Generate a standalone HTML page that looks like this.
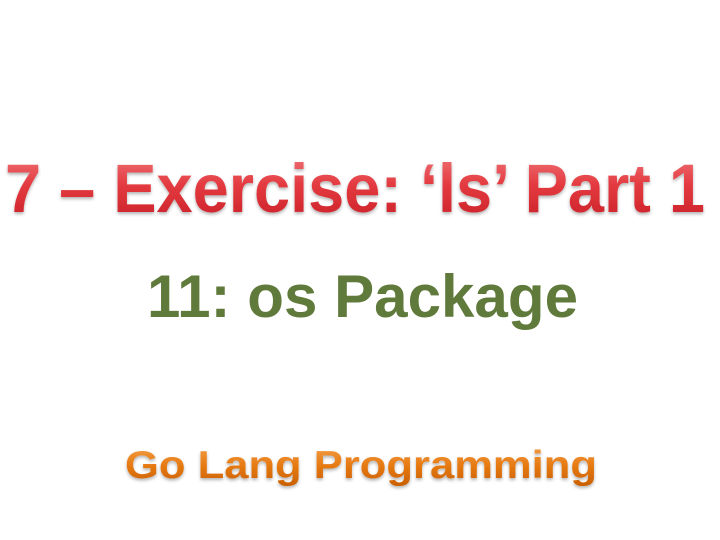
<!DOCTYPE html>
<html><head><style>html,body{margin:0;padding:0;background:#fff;}svg{display:block}</style></head>
<body>
<svg width="720" height="540" xmlns="http://www.w3.org/2000/svg">
<defs>
<linearGradient id="r" x1="0" y1="0" x2="0" y2="1"><stop offset="0" stop-color="#f07a7e"/><stop offset="0.45" stop-color="#e33a40"/><stop offset="1" stop-color="#c81e26"/></linearGradient>
<linearGradient id="o" x1="0" y1="0" x2="0" y2="1"><stop offset="0" stop-color="#f4a04a"/><stop offset="0.5" stop-color="#e67a12"/><stop offset="1" stop-color="#c85e00"/></linearGradient>
<filter id="s" x="-5%" y="-20%" width="110%" height="150%"><feDropShadow dx="0" dy="2" stdDeviation="1.5" flood-color="#000" flood-opacity="0.3"/></filter>
</defs>
<text x="5" y="212" font-family="Liberation Sans, sans-serif" font-weight="bold" font-size="69" fill="url(#r)" textLength="700" lengthAdjust="spacingAndGlyphs" filter="url(#s)">7 – Exercise: ‘ls’ Part 1</text>
<text x="147" y="317" font-family="Liberation Sans, sans-serif" font-weight="bold" font-size="60" fill="#607a3c" textLength="431" lengthAdjust="spacingAndGlyphs">11: os Package</text>
<text x="125" y="478" font-family="Liberation Sans, sans-serif" font-weight="bold" font-size="39" fill="url(#o)" textLength="472" lengthAdjust="spacingAndGlyphs" filter="url(#s)">Go Lang Programming</text>
</svg>
</body></html>
